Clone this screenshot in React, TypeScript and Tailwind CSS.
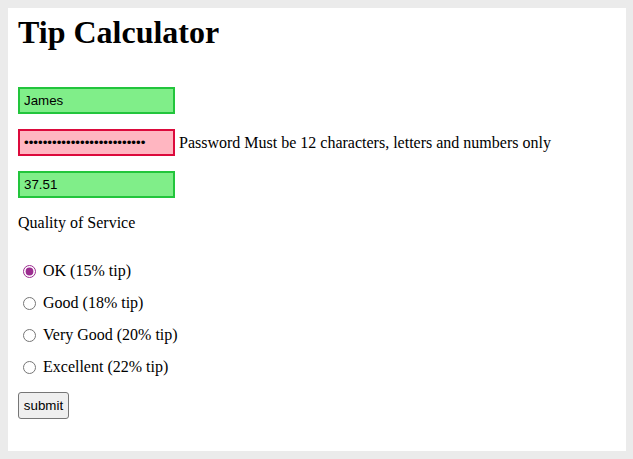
export default function App() {
  const options = [
    { label: 'OK (15% tip)', checked: true },
    { label: 'Good (18% tip)', checked: false },
    { label: 'Very Good (20% tip)', checked: false },
    { label: 'Excellent (22% tip)', checked: false },
  ];

  return (
    <div className="min-h-[459px] bg-[#ebebeb] pt-2 pl-2 pr-[7px] pb-2 font-['Liberation_Serif',serif] text-black">
      <div className="bg-white h-[443px] px-[10px] pt-[6px]">
        <h1 className="text-[32px] font-bold leading-[37px]">Tip Calculator</h1>

        <form className="flex flex-col mt-[36px]" onSubmit={(e) => e.preventDefault()}>
          <div className="flex items-center h-[27px]">
            <input
              type="text"
              defaultValue="James"
              className="w-[157px] h-[27px] border-2 border-[#22c53c] bg-[#80ee89] px-1 text-[13.33px] font-['Liberation_Sans',Arial,sans-serif] outline-none"
            />
          </div>

          <div className="flex items-center h-[27px] mt-[15px]">
            <input
              type="password"
              defaultValue="passwordpasswordpassword12"
              className="w-[157px] h-[27px] border-2 border-[#dc0a3c] bg-[#ffb6c1] px-1 text-[13.33px] font-['Liberation_Sans',Arial,sans-serif] outline-none"
            />
            <span className="ml-1 text-[16px] leading-[18px]">
              Password Must be 12 characters, letters and numbers only
            </span>
          </div>

          <div className="flex items-center h-[27px] mt-[15px]">
            <input
              type="text"
              defaultValue="37.51"
              className="w-[157px] h-[27px] border-2 border-[#22c53c] bg-[#80ee89] px-1 text-[13.33px] font-['Liberation_Sans',Arial,sans-serif] outline-none"
            />
          </div>

          <p className="mt-[16px] text-[16px] leading-[18px]">Quality of Service</p>

          <div className="flex flex-col gap-[14px] mt-[30px]">
            {options.map((opt) => (
              <label key={opt.label} className="flex items-center h-[18px] text-[16px] leading-[18px]">
                <input
                  type="radio"
                  name="quality"
                  defaultChecked={opt.checked}
                  className="w-[13px] h-[13px] ml-[5px] mr-[7px] accent-[#9b2c8f]"
                />
                {opt.label}
              </label>
            ))}
          </div>

          <div className="mt-[16px]">
            <button
              type="submit"
              className="h-[27px] w-[51px] border border-[#767676] rounded-[3px] bg-[#efefef] text-[13.33px] font-['Liberation_Sans',Arial,sans-serif]"
            >
              submit
            </button>
          </div>
        </form>
      </div>
    </div>
  );
}
